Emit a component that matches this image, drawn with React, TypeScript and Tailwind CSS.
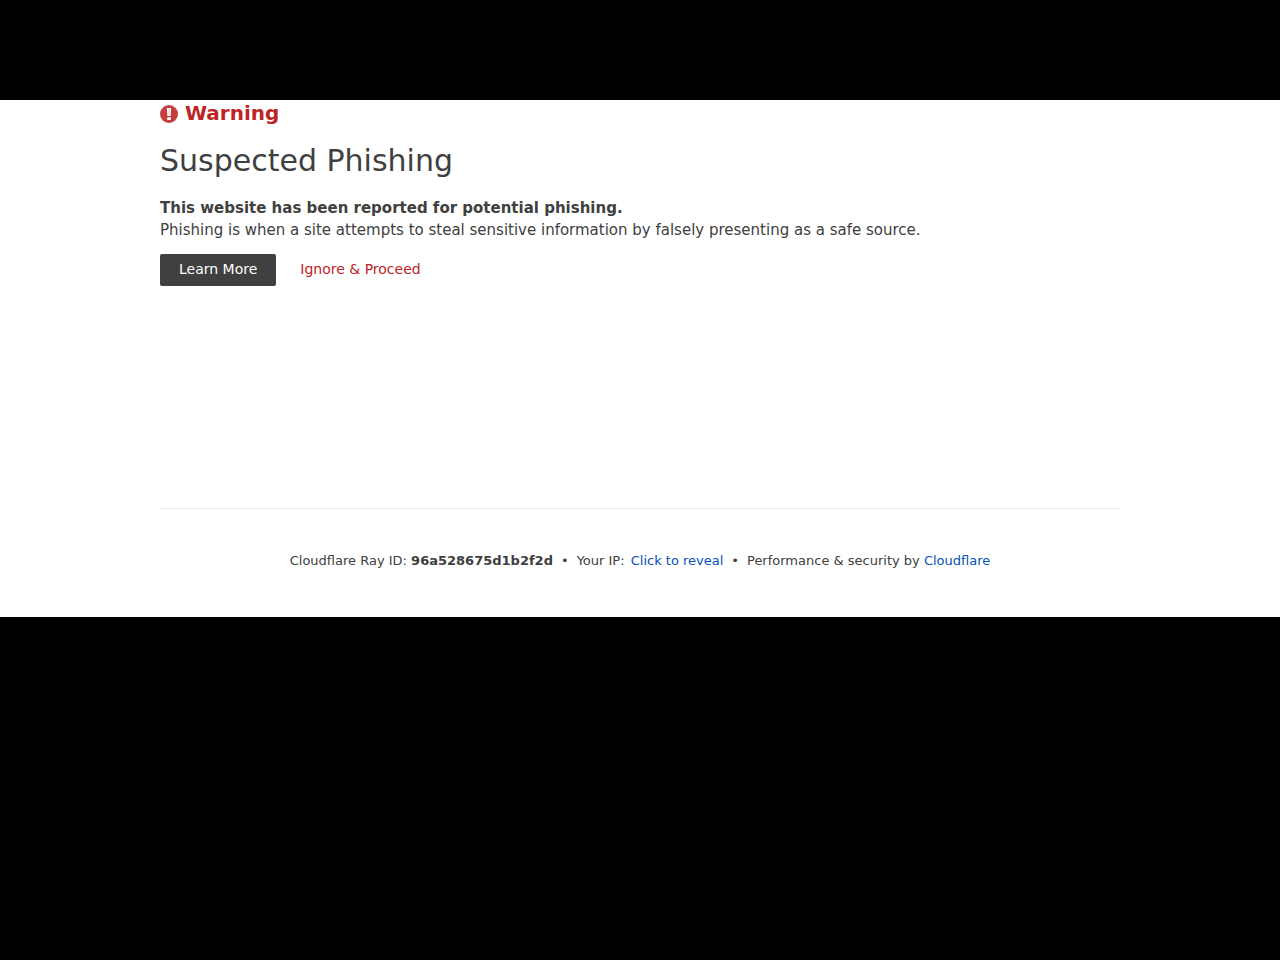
const RAY_ID = '96a528675d1b2f2d';

function WarningIcon() {
  return (
    <svg aria-hidden="true" viewBox="0 0 18 20" className="h-5 w-[18px] shrink-0">
      <circle cx="9" cy="11" r="9" fill="#bd2426" fillOpacity="0.88" />
      <path d="M6.9 5h4.2l-.5 8H7.4z" fill="#fff" />
      <path d="M8.6 6h.8l-.1 6h-.6z" fill="#e9b4b4" />
      <rect x="7.2" y="14.3" width="3.6" height="2.7" rx="0.5" fill="#fff" />
    </svg>
  );
}

export default function App() {
  return (
    <div className="min-h-screen bg-black pt-[100px] font-['DejaVu_Sans',sans-serif] text-[#404040]">
      <div className="bg-white">
        <main className="mx-auto max-w-[960px]">
          <header>
            <p className="flex items-center gap-[7px] text-[20px] leading-[26px] font-bold text-[#bd2426]">
              <WarningIcon />
              Warning
            </p>
            <h1 className="mt-4 text-[30px] leading-[38px]">Suspected Phishing</h1>
          </header>

          <section className="mt-[17px] text-[15px] leading-[22px]">
            <strong className="block">This website has been reported for potential phishing.</strong>
            <p>Phishing is when a site attempts to steal sensitive information by falsely presenting as a safe source.</p>
          </section>

          <div className="mt-[13px] flex items-center gap-6 text-[14px] leading-[20px]">
            <a href="#learn-more" className="rounded-xs bg-[#404040] px-[19px] pt-[5px] pb-[7px] text-white">Learn More</a>
            <button type="button" className="pb-[2px] text-[#bd2426]">Ignore &amp; Proceed</button>
          </div>

          <footer className="mt-[222px] border-t border-[#ebebeb] pt-[42px] pb-[46px] text-center text-[13px] leading-[20px]">
            <span>Cloudflare Ray ID: <strong>{RAY_ID}</strong></span>
            <span className="px-2">•</span>
            <span>Your IP: <button type="button" className="pl-[2px] text-[#0a51b4]">Click to reveal</button></span>
            <span className="px-2">•</span>
            <span>Performance &amp; security by <a href="#cloudflare" className="text-[#0a51b4]">Cloudflare</a></span>
          </footer>
        </main>
      </div>
    </div>
  );
}
